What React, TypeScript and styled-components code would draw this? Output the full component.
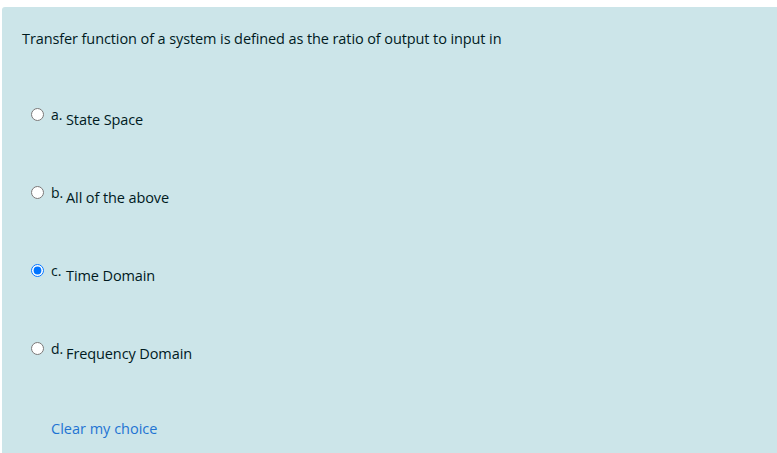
import React, { useState } from 'react';
import styled, { createGlobalStyle } from 'styled-components';

const GlobalStyle = createGlobalStyle`
  html, body {
    margin: 0;
    padding: 0;
    background: #ffffff;
  }
  body {
    font-family: 'Open Sans', 'Noto Sans', Arial, sans-serif;
    color: #001a1e;
  }
`;

const Formulation = styled.div`
  margin: 7px 0 0 2px;
  height: 446px;
  box-sizing: border-box;
  background: #cce5e9;
  border-radius: 3px 0 0 0;
  padding: 22px 20px 0 20px;
`;

const QText = styled.div`
  font-size: 14.5px;
  line-height: 20px;
  letter-spacing: -0.1px;
`;

const Answers = styled.div`
  display: flex;
  flex-direction: column;
  margin-top: 58px;
  padding-left: 9px;
`;

const Option = styled.label`
  display: flex;
  align-items: flex-start;
  height: 78px;
  cursor: pointer;
`;

const Radio = styled.input`
  width: 13px;
  height: 13px;
  margin: 1px 7px 0 0;
  accent-color: #0075ff;
`;

const Letter = styled.span`
  font-size: 14px;
  line-height: 16px;
  width: 15px;
`;

const Text = styled.span`
  font-size: 14.5px;
  line-height: 20px;
  margin-top: 3px;
  letter-spacing: -0.1px;
`;

const ClearLink = styled.a`
  display: block;
  width: fit-content;
  margin: 0 0 0 29px;
  font-size: 14.5px;
  line-height: 20px;
  color: #1f74d3;
  text-decoration: none;
  cursor: pointer;
`;

const options = [
  { letter: 'a.', text: 'State Space' },
  { letter: 'b.', text: 'All of the above' },
  { letter: 'c.', text: 'Time Domain' },
  { letter: 'd.', text: 'Frequency Domain' },
];

const App: React.FC = () => {
  const [choice, setChoice] = useState<number | null>(2);

  return (
    <>
      <GlobalStyle />
      <Formulation>
        <QText>Transfer function of a system is defined as the ratio of output to input in</QText>
        <Answers>
          {options.map((o, i) => (
            <Option key={o.letter}>
              <Radio
                type='radio'
                name='answer'
                checked={choice === i}
                onChange={() => setChoice(i)}
              />
              <Letter>{o.letter}</Letter>
              <Text>{o.text}</Text>
            </Option>
          ))}
        </Answers>
        <ClearLink onClick={() => setChoice(null)}>Clear my choice</ClearLink>
      </Formulation>
    </>
  );
};

export default App;
